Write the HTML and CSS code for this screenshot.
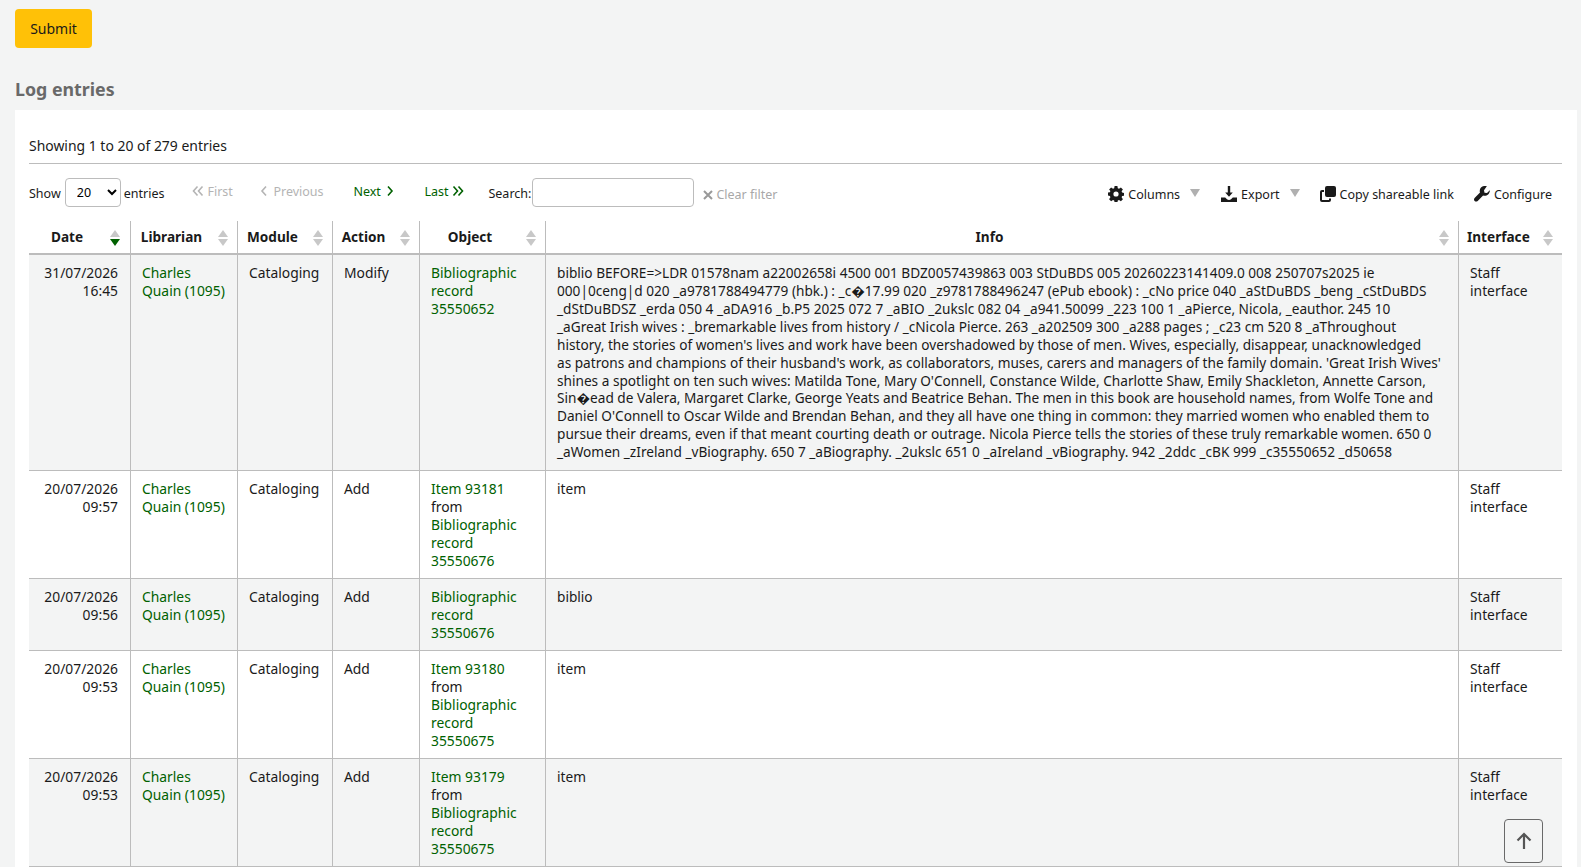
FILE: index.html
```
<!DOCTYPE html>
<html>
	<head>
		<meta charset="utf-8" />
		<title>Log viewer</title>
		<link rel="stylesheet" href="styles.css">
	</head>
	<body>
		<button class="submit" type="button">Submit</button>
		<h2 class="heading">Log entries</h2>
		<div class="panel">
			<div class="info-line">Showing 1 to 20 of 279 entries</div>
			<div class="toolbar">
				<label class="length">Show <select class="length-select"><option>20</option></select> entries</label>
				<div class="pager">
					<a class="page off page-first"><svg class="chev" viewBox="0 0 12 12"><path d="M5.5 1.5 1.5 6l4 4.500M10.500 1.500 6.500 6l4 4.500"/></svg>First</a>
					<a class="page off page-prev"><svg class="chev" viewBox="0 0 12 12"><path d="M8 1.500 4 6l4 4.500"/></svg> Previous</a>
					<a class="page page-next">Next <svg class="chev" viewBox="0 0 12 12"><path d="M4 1.500 8 6l-4 4.500"/></svg></a>
					<a class="page page-last">Last <svg class="chev" viewBox="0 0 12 12"><path d="M1.500 1.500 5.500 6l-4 4.500M6.500 1.500l4 4.500-4 4.500"/></svg></a>
				</div>
				<label class="search">Search: <input class="search-input" type="text"></label>
				<a class="clear"><svg class="clear-x" viewBox="0 0 12 12"><path d="M2 2l8 8M10 2l-8 8"/></svg>Clear filter</a>
				<div class="tools">
					<a class="tool tool-columns">
						<svg class="tool-icon" viewBox="0 0 16 16"><path d="M6.600 0h2.800l.4 2.200 1.200.5L12.900 1.400l2 2-1.300 1.900.5 1.200 1.900.4v2.800l-1.900.4-.5 1.200 1.300 1.900-2 2-1.900-1.300-1.200.5-.4 2.200H6.600l-.4-2.200-1.200-.5-1.900 1.300-2-2 1.300-1.900-.5-1.200L0 9.400V6.600l1.900-.4.5-1.200L1.100 3.400l2-2L5 2.700l1.200-.5zM8 5.400a2.600 2.600 0 1 0 0 5.200 2.600 2.600 0 0 0 0-5.200z" fill-rule="evenodd"/></svg>
						Columns
						<span class="caret"></span>
					</a>
					<a class="tool tool-export">
						<svg class="tool-icon" viewBox="0 0 16 16"><path d="M6.800 0h2.400v6.500h2.600L8 10.800 4.200 6.500h2.600zM0 11.500h4.200L6 13.200c1.100 1 2.900 1 4 0l1.800-1.700H16V16H0z"/></svg>
						Export
						<span class="caret"></span>
					</a>
					<a class="tool tool-copy">
						<svg class="tool-icon" viewBox="0 0 16 16"><rect x="5" y="0" width="11" height="11" rx="2"/><path d="M4 4H2a2 2 0 0 0-2 2v8a2 2 0 0 0 2 2h7a2 2 0 0 0 2-2v-1.500H9V14H2V6h2z"/></svg>
						Copy shareable link
					</a>
					<a class="tool tool-config">
						<svg class="tool-icon" viewBox="0 0 16 16"><path d="M15.800 4.300 13 7.100l-2.500-.4-.5-2.500L12.800.3C10.800-.5 8.400 0 7 1.600 5.700 3 5.400 4.900 6 6.600L.6 12c-.8.800-.8 2.200 0 3 .8.800 2.200.8 3.100 0l5.400-5.400c1.700.6 3.700.2 5-1.100 1.300-1.300 2.100-3.800 1.700-4.200z"/></svg>
						Configure
					</a>
				</div>
			</div>
			<table class="log-table">
				<colgroup>
					<col class="col-date"><col class="col-lib"><col class="col-mod"><col class="col-act"><col class="col-obj"><col class="col-info"><col class="col-int">
				</colgroup>
				<thead>
					<tr>
						<th>Date<span class="sort sort-active"></span></th>
						<th>Librarian<span class="sort"></span></th>
						<th>Module<span class="sort"></span></th>
						<th>Action<span class="sort"></span></th>
						<th>Object<span class="sort"></span></th>
						<th>Info<span class="sort"></span></th>
						<th>Interface<span class="sort"></span></th>
					</tr>
				</thead>
				<tbody>
					<tr>
						<td class="date">31/07/2026<br>16:45</td>
						<td><a>Charles<br>Quain (1095)</a></td>
						<td>Cataloging</td>
						<td>Modify</td>
						<td><a>Bibliographic<br>record<br>35550652</a></td>
						<td class="info">biblio BEFORE=&gt;LDR 01578nam a22002658i 4500 001 BDZ0057439863 003 StDuBDS 005 20260223141409.0 008 250707s2025 ie<br>000|0ceng|d 020 _a9781788494779 (hbk.) : _c�17.99 020 _z9781788496247 (ePub ebook) : _cNo price 040 _aStDuBDS _beng _cStDuBDS<br>_dStDuBDSZ _erda 050 4 _aDA916 _b.P5 2025 072 7 _aBIO _2ukslc 082 04 _a941.50099 _223 100 1 _aPierce, Nicola, _eauthor. 245 10<br>_aGreat Irish wives : _bremarkable lives from history / _cNicola Pierce. 263 _a202509 300 _a288 pages ; _c23 cm 520 8 _aThroughout<br>history, the stories of women's lives and work have been overshadowed by those of men. Wives, especially, disappear, unacknowledged<br>as patrons and champions of their husband's work, as collaborators, muses, carers and managers of the family domain. 'Great Irish Wives'<br>shines a spotlight on ten such wives: Matilda Tone, Mary O'Connell, Constance Wilde, Charlotte Shaw, Emily Shackleton, Annette Carson,<br>Sin�ead de Valera, Margaret Clarke, George Yeats and Beatrice Behan. The men in this book are household names, from Wolfe Tone and<br>Daniel O'Connell to Oscar Wilde and Brendan Behan, and they all have one thing in common: they married women who enabled them to<br>pursue their dreams, even if that meant courting death or outrage. Nicola Pierce tells the stories of these truly remarkable women. 650 0<br>_aWomen _zIreland _vBiography. 650 7 _aBiography. _2ukslc 651 0 _aIreland _vBiography. 942 _2ddc _cBK 999 _c35550652 _d50658</td>
						<td>Staff<br>interface</td>
					</tr>
					<tr>
						<td class="date">20/07/2026<br>09:57</td>
						<td><a>Charles<br>Quain (1095)</a></td>
						<td>Cataloging</td>
						<td>Add</td>
						<td><a>Item 93181</a><br>from<br><a>Bibliographic<br>record<br>35550676</a></td>
						<td class="info">item</td>
						<td>Staff<br>interface</td>
					</tr>
					<tr>
						<td class="date">20/07/2026<br>09:56</td>
						<td><a>Charles<br>Quain (1095)</a></td>
						<td>Cataloging</td>
						<td>Add</td>
						<td><a>Bibliographic<br>record<br>35550676</a></td>
						<td class="info">biblio</td>
						<td>Staff<br>interface</td>
					</tr>
					<tr>
						<td class="date">20/07/2026<br>09:53</td>
						<td><a>Charles<br>Quain (1095)</a></td>
						<td>Cataloging</td>
						<td>Add</td>
						<td><a>Item 93180</a><br>from<br><a>Bibliographic<br>record<br>35550675</a></td>
						<td class="info">item</td>
						<td>Staff<br>interface</td>
					</tr>
					<tr>
						<td class="date">20/07/2026<br>09:53</td>
						<td><a>Charles<br>Quain (1095)</a></td>
						<td>Cataloging</td>
						<td>Add</td>
						<td><a>Item 93179</a><br>from<br><a>Bibliographic<br>record<br>35550675</a></td>
						<td class="info">item</td>
						<td>Staff<br>interface</td>
					</tr>
				</tbody>
			</table>
		</div>
		<a class="back-top"><svg class="back-arrow" viewBox="0 0 16 18"><path d="M8 17V2M1.500 8.500 8 2l6.500 6.500"/></svg></a>
	</body>
</html>
```

FILE: styles.css
```
*{
	box-sizing: border-box;
}
html,body{
	height: 100%;
	overflow: hidden;
}
body{
	margin: 0;
	padding: 9px 4px 0 15px;
	background-color: #f3f4f4;
	color: #1a1a1a;
	font-family: "Noto Sans", "Liberation Sans", sans-serif;
	font-size: 13.85px;
	line-height: 17.92px;
}
a{
	color: #006100;
}
.submit{
	display: block;
	width: 77px;
	height: 39px;
	border: 0;
	border-radius: 4px;
	background-color: #ffc107;
	color: #1a1a1a;
	font-family: inherit;
	font-size: 14px;
}
.heading{
	margin: 30px 0 9px;
	height: 23px;
	color: #696969;
	font-size: 17.800px;
	line-height: 23px;
	font-weight: 700;
}
.panel{
	background-color: white;
	padding: 27px 15px 0 14px;
	height: 758px;
}
.info-line{
	height: 27px;
	border-bottom: 1px solid #bcbcbc;
	font-size: 13.950px;
}
.toolbar{
	display: flex;
	align-items: center;
	height: 57px;
	font-size: 12.500px;
}
.length,
.search{
	display: flex;
	align-items: center;
	margin-top: 2px;
}
.length{
	gap: 3px;
}
.search{
	gap: 1px;
}
.length-select{
	width: 56px;
	height: 29px;
	margin: -2px 0 0 1px;
	padding-left: 7px;
	border: 1px solid #bcbcbc;
	border-radius: 4px;
	background-color: white;
	font-family: inherit;
	font-size: 12.500px;
}
.pager{
	display: flex;
	margin: -2px 0 0 28px;
}
.page{
	display: flex;
	align-items: center;
	gap: 3px;
}
.off{
	color: #b4b4b4;
}
.page-first{
	width: 66px;
}
.page-prev{
	width: 95px;
}
.page-next{
	width: 71px;
}
.page-last{
	width: 64px;
}
.chev{
	width: 12px;
	height: 12px;
	fill: none;
	stroke: currentColor;
	stroke-width: 1.600;
}
.search-input{
	width: 162px;
	height: 29px;
	margin-top: -2px;
	border: 1px solid #bcbcbc;
	border-radius: 4px;
}
.clear{
	display: flex;
	align-items: center;
	gap: 2px;
	margin: 5px 0 0 8px;
	color: #a8a8a8;
}
.clear-x{
	width: 12px;
	height: 12px;
	fill: none;
	stroke: #999;
	stroke-width: 2;
}
.tools{
	display: flex;
	margin: 4px 0 0 auto;
	padding-right: 10px;
}
.tool{
	display: flex;
	align-items: center;
	gap: 4px;
	color: #1a1a1a;
}
.tool-icon{
	width: 16px;
	height: 16px;
	fill: #1a1a1a;
}
.caret{
	width: 0;
	height: 0;
	margin: -3px 0 0 6px;
	border-left: 5px solid transparent;
	border-right: 5px solid transparent;
	border-top: 8px solid #b0b0b0;
}
.tool-columns{
	margin-right: 21px;
}
.tool-export{
	margin-right: 20px;
}
.tool-copy{
	margin-right: 20px;
}
.log-table{
	width: 1533px;
	table-layout: fixed;
	border-collapse: separate;
	border-spacing: 0;
}
.col-date{width: 102px;}
.col-lib{width: 107px;}
.col-mod{width: 95px;}
.col-act{width: 87px;}
.col-obj{width: 126px;}
.col-info{width: 913px;}
.col-int{width: 103px;}
th{
	position: relative;
	height: 34px;
	padding: 0 33px 0 8px;
	border-right: 1px solid #bcbcbc;
	border-bottom: 2px solid #bcbcbc;
	color: #1a1a1a;
	font-size: 13.600px;
	font-weight: 700;
	text-align: center;
}
td{
	padding: 9px 12px 8.300px 11px;
	border-right: 1px solid #bcbcbc;
	border-bottom: 1px solid #bcbcbc;
	vertical-align: top;
	white-space: nowrap;
}
tbody tr:first-child td{
	padding-bottom: 9.300px;
}
.info{
	font-size: 13.650px;
}
th:last-child,
td:last-child{
	border-right: 0;
}
tbody tr:nth-child(odd) td{
	background-color: #f3f4f4;
}
.date{
	text-align: right;
}
.sort{
	position: absolute;
	right: 9px;
	top: 9px;
	width: 10px;
	height: 16px;
}
th:first-child .sort{
	right: 10px;
}
.sort::before,
.sort::after{
	content: "";
	position: absolute;
	left: 0;
	border-left: 5px solid transparent;
	border-right: 5px solid transparent;
}
.sort::before{
	top: 0;
	border-bottom: 7px solid #c8c8c8;
}
.sort::after{
	bottom: 0;
	border-top: 7px solid #c8c8c8;
}
.sort-active::after{
	border-top-color: #006100;
}
.back-top{
	position: fixed;
	left: 1504px;
	top: 819px;
	display: flex;
	align-items: center;
	justify-content: center;
	width: 39px;
	height: 44px;
	border: 1px solid #696969;
	border-radius: 4px;
	background-color: #f3f4f4;
}
.back-arrow{
	width: 16px;
	height: 18px;
	fill: none;
	stroke: #555;
	stroke-width: 2.200;
}
```
